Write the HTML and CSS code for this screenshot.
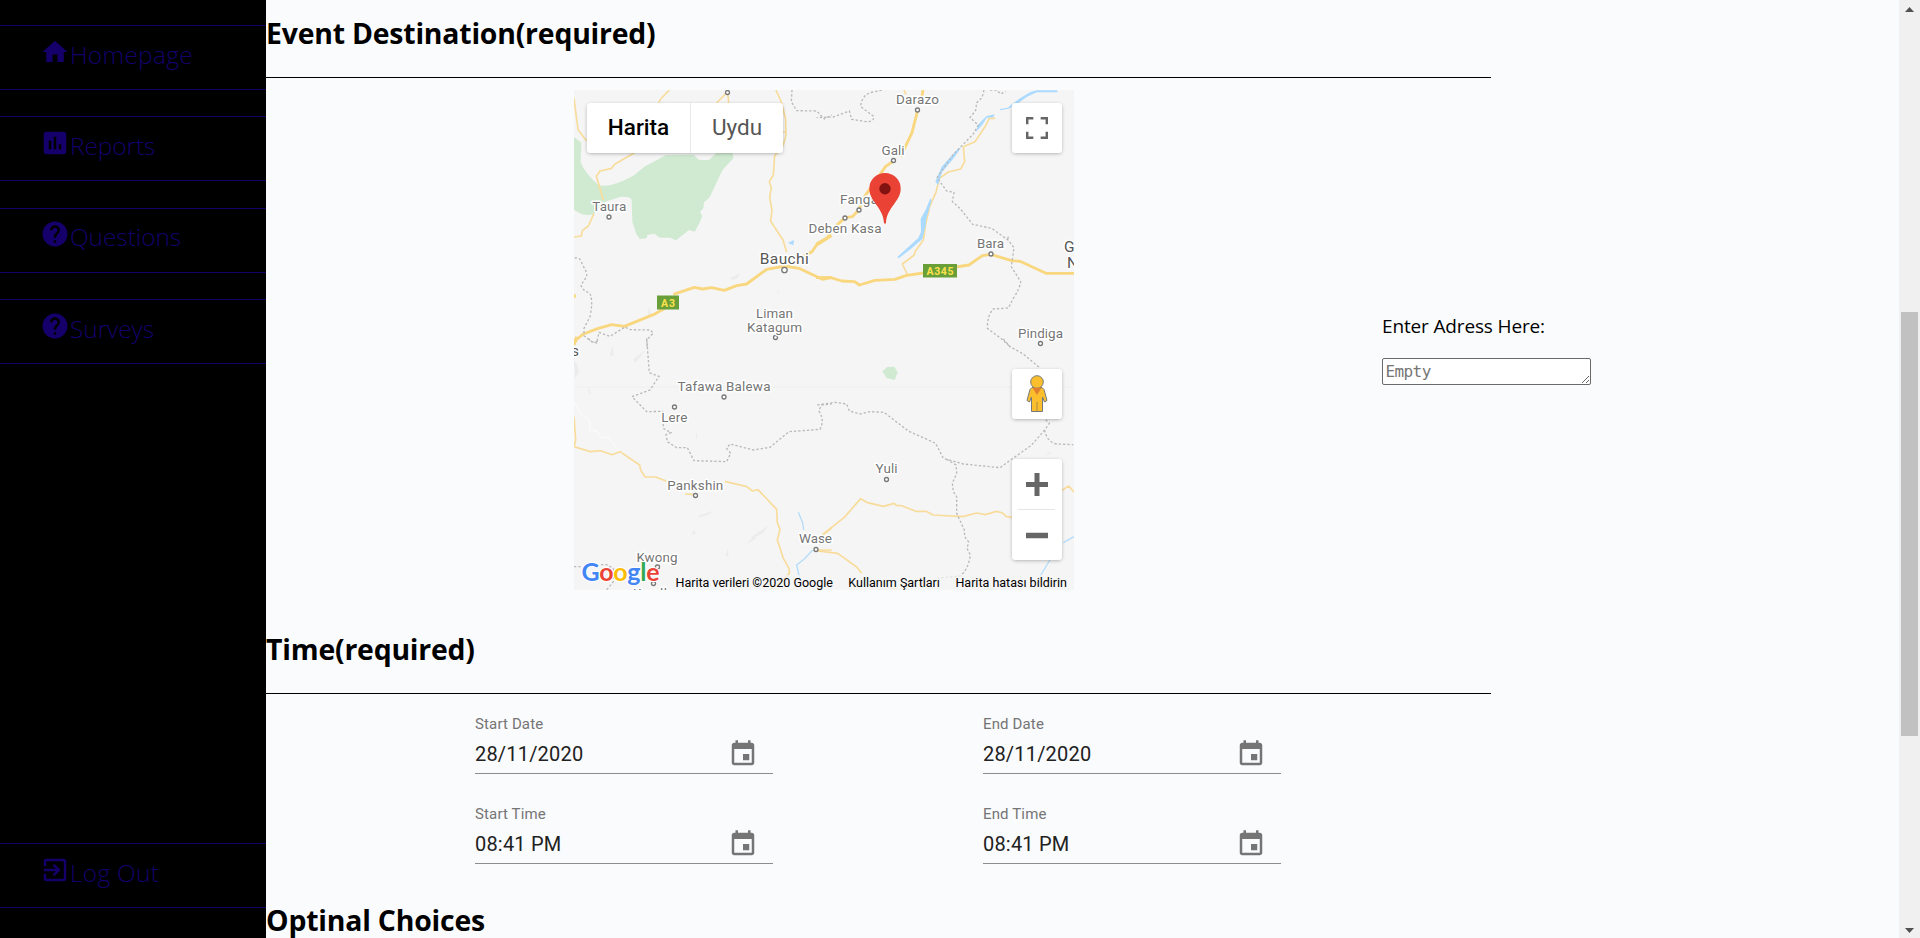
FILE: index.html
```html
<!DOCTYPE html>
<html lang="en">
<head>
<meta charset="utf-8">
<title>Create Event</title>
<link rel="stylesheet" href="styles.css">
</head>
<body>
<svg class="defs" width="0" height="0" aria-hidden="true">
  <symbol id="i-home" viewBox="0 0 24 24"><path d="M10 20v-6h4v6h5v-8h3L12 3 2 12h3v8z"/></symbol>
  <symbol id="i-chart" viewBox="0 0 24 24"><path d="M19 3H5c-1.100 0-2 .9-2 2v14c0 1.100.9 2 2 2h14c1.100 0 2-.9 2-2V5c0-1.100-.9-2-2-2zM9 17H7v-7h2v7zm4 0h-2V7h2v10zm4 0h-2v-4h2v4z"/></symbol>
  <symbol id="i-help" viewBox="0 0 24 24"><path d="M12 2C6.480 2 2 6.480 2 12s4.480 10 10 10 10-4.480 10-10S17.520 2 12 2zm1 17h-2v-2h2v2zm2.070-7.750l-.9.920C13.450 12.900 13 13.500 13 15h-2v-.5c0-1.100.450-2.100 1.170-2.830l1.240-1.260c.370-.360.590-.860.590-1.410 0-1.100-.9-2-2-2s-2 .9-2 2H8c0-2.210 1.790-4 4-4s4 1.790 4 4c0 .880-.360 1.680-.930 2.250z"/></symbol>
  <symbol id="i-exit" viewBox="0 0 24 24"><path d="M10.090 15.590L11.500 17l5-5-5-5-1.410 1.410L12.670 11H3v2h9.670l-2.580 2.590zM19 3H5c-1.110 0-2 .9-2 2v4h2V5h14v14H5v-4H3v4c0 1.100.890 2 2 2h14c1.100 0 2-.9 2-2V5c0-1.100-.9-2-2-2z"/></symbol>
  <symbol id="i-cal" viewBox="0 0 24 24"><path d="M17 12h-5v5h5v-5zM16 1v2H8V1H6v2H5c-1.110 0-1.990.9-1.990 2L3 19c0 1.100.890 2 2 2h14c1.100 0 2-.9 2-2V5c0-1.100-.9-2-2-2h-1V1h-2zm3 18H5V8h14v11z"/></symbol>
</svg>
<div class="app">
  <nav class="sidebar">
    <div class="nav-group">
      <a class="nav-item"><svg class="icon"><use href="#i-home"/></svg><span class="nav-text nav-wide">Homepage</span></a>
      <a class="nav-item"><svg class="icon"><use href="#i-chart"/></svg><span class="nav-text">Reports</span></a>
      <a class="nav-item"><svg class="icon"><use href="#i-help"/></svg><span class="nav-text">Questions</span></a>
      <a class="nav-item"><svg class="icon"><use href="#i-help"/></svg><span class="nav-text">Surveys</span></a>
    </div>
    <a class="nav-item"><svg class="icon"><use href="#i-exit"/></svg><span class="nav-text nav-wide">Log Out</span></a>
  </nav>

  <main class="content">
    <h2 class="title title-destination">Event Destination(required)</h2>
    <section class="destination">
      <div class="map">
        <svg class="map-art" width="500" height="500" viewBox="0 0 500 500">
          <rect width="500" height="500" fill="#f5f5f5"/>
          <path d="M0 297H500" stroke="#efefef"/>
          <!-- north west -->
          <g transform="translate(-4 -5) scale(.33333)">
            <path class="park" d="M12 156L34 173 32 232Q45 265 85 300 120 310 190 272L223 245 287 211 370 209 388 225H417L440 203H488L490 220 458 254 418 338 402 352 400 370 390 380 397 393 388 415 374 440 357 435 318 466 300 458H270L253 446 232 450 230 460 209 462 199 447 187 410 185 345Q180 333 150 336L105 350 70 388Q40 395 12 374z"/>
            <path class="water" d="M654 474L672 465 670 481z"/>
            <path class="relief" d="M480 580L510 564 503 578 488 585zM613 628L630 612 627 620zM233 690L238 665 244 690z"/>
            <path class="road" d="M12 40L24 134 50 168M298 15L272 42 266 54M440 54L473 20 476 54M618 15L635 54 647 103 648 150 640 180 614 212 610 270 598 290 604 308 599 338 606 375 602 409 639 465 650 502M205 196L178 212 134 238 125 250 90 258 79 274 100 345M72 385L55 423 37 437 34 453 12 456M635 141H648"/>
            <path class="highway" d="M12 780L18 765 40 747 85 730 125 719 163 724 250 689 285 670M310 628L373 607 398 612 425 608 463 616 500 602 530 597 590 553 645 543 690 551 757 583 785 578M700 514L726 500 738 482 785 452"/>
            <circle cx="11" cy="633" r="7" fill="#f9d77b"/>
            <path class="border" d="M666 15L664 50 680 77 740 78 763 102 785 90M14 519Q32 515 37 540 52 560 50 575L33 600Q35 615 60 625 70 650 60 695L42 730 42 752 65 770 80 774 87 742 120 754 165 726 180 734 240 735 250 744 230 765 232 790"/>
          </g>
          <!-- north east -->
          <g transform="translate(246 -5) scale(.33333)">
            <path class="road" d="M252 15L258 29M525 100H508L496 124 465 170 430 185 434 230 422 252 385 261 358 280 348 322 330 362 318 412 310 465 285 500 283 510 247 537 263 570"/>
            <path class="highway" d="M309 15L305 38 296 50M292 80L276 143 242 215M221 228L197 244 165 290 130 340 117 374 97 395 75 398 40 430 22 458-12 478M-12 578L30 577 66 588 104 590 118 600 165 586 225 583 260 571 310 564M408 546L447 540 487 512 512 508 575 527 600 529 678 565 762 565"/>
            <path class="water" d="M232 516L275 477 295 459 303 440 302 402 318 372 331 340 335 346 319 402 317 422 307 462 275 490 236 520zM346 290L365 245 410 196 424 187 402 218 366 262 354 300zM467 142L475 118 500 93 524 88 520 97 500 98 488 118zM540 72L563 68 600 40 630 22 650 16H712V22H650L620 36 590 58 565 71 541 76z"/>
            <path class="border" d="M185 15L165 20Q125 25 122 65L162 95Q160 115 128 108L95 103 88 78 40 96-10 98M492 15L486 38 470 53 467 76 450 98 475 120 460 147 400 208 351 278 380 318 402 322 397 350 420 370 458 418 515 430 565 466 582 488 574 545 602 590Q600 610 580 640L565 669 520 672Q502 690 502 730L545 762 570 785M510 15H530L542 27 557 20M565 455L562 467"/>
          </g>
          <!-- south west -->
          <g transform="translate(-4 250) scale(.33333)">
            <path class="relief" d="M54 140L61 152 62 165 56 160zM120 45L128 15 131 45 122 50zM190 57L225 30 210 52 195 68zM12 60L22 75 27 95 15 115zM377 290L380 270 382 300zM383 528L430 512 415 525 388 532zM363 585L373 568 377 582zM520 627L550 588 560 594 535 610zM545 590L595 556 580 578 550 595zM468 645L473 625 476 655z"/>
            <path d="M12 185L30 220 60 245V270L82 274 92 293H113L150 335" fill="none" stroke="#fcfcfc" stroke-width="3"/>
            <path class="road" d="M12 230L17 300 12 320 60 335 92 332 126 344 150 335 209 375 212 390 225 411 257 411 290 424M345 462L375 464M465 424L530 440 548 453 564 449 620 508 622 548 630 568 622 600 640 655 657 685 658 700 640 720 600 750M730 630H785M758 585L785 564"/>
            <path class="highway" d="M20-10L11 12"/>
            <path d="M728 630L703 657 680 675 690 720M685 517L698 548 701 570" class="river"/>
            <path class="border" d="M55-5Q70 15 87 0M230-5L238 98 267 109 240 150 186 170 230 215 278 214 280 265 303 278 288 284 292 305 320 323H352L372 362 470 365 482 340 470 325 480 312 550 330 600 322 657 275 750 268Q765 240 746 212L755 195 785 192M12 680H35M80 674H110L130 685V725L110 750"/>
          </g>
          <!-- south east -->
          <g transform="translate(246 250) scale(.33333)">
            <path class="park" d="M187 94L202 81 223 80 233 97 224 120 200 114z"/>
            <path class="park" d="M485 750Q495 740 525 747L522 750z"/>
            <path class="relief" d="M672 347L690 335 695 340 680 345z"/>
            <path class="road" d="M8 583L73 532 122 476 140 487 190 499 223 490 228 496 245 497 287 514H318L340 525 428 530 470 519 495 524 530 514 548 519 558 529 578 533M725 452L746 438 762 456M-12 632L53 640 110 681 125 700M210 742L232 750"/>
            <path class="river" d="M762 590L730 608M690 660L664 702 650 740"/>
            <path class="border" d="M-8 195L45 187 80 192 88 213 120 222 150 215 192 217 265 273 347 310 370 355 430 372 540 383 635 315 674 270 688 250 670 232M674 270Q680 305 710 312L760 314M380 358L408 375 410 400 397 430 400 455 410 470V520L433 570 434 590 446 606 441 625 451 645Q445 690 420 708L350 715M550-3L570 20 610 42 660 84"/>
          </g>
          <g class="dots">
            <circle cx="153.500" cy="2.500" r="2"/><circle cx="35" cy="127" r="2"/><circle cx="210.500" cy="180" r="2.700"/><circle cx="201.500" cy="247.500" r="2"/>
            <circle cx="343.500" cy="20" r="2"/><circle cx="319.500" cy="70.500" r="2"/><circle cx="285" cy="120" r="2"/><circle cx="271" cy="128" r="2"/><circle cx="417" cy="164" r="2"/><circle cx="466.500" cy="253.500" r="2"/>
            <circle cx="150" cy="307" r="2"/><circle cx="100.500" cy="317" r="2"/><circle cx="121.500" cy="405.500" r="2"/><circle cx="242" cy="459.500" r="2"/><circle cx="83.500" cy="477" r="2"/><circle cx="79.500" cy="493.500" r="2"/><circle cx="312.500" cy="389.500" r="2"/>
          </g>
          <g class="places">
            <text x="35.300" y="121" textLength="34">Taura</text>
            <text x="343.500" y="14" textLength="43">Darazo</text>
            <text x="319" y="64.500" textLength="23">Gali</text>
            <text x="266" y="114" class="start" textLength="38">Fanga</text>
            <text x="271" y="143" textLength="73">Deben Kasa</text>
            <text x="416.500" y="157.500" textLength="27">Bara</text>
            <text x="466.500" y="247.500" textLength="45">Pindiga</text>
            <text x="200.500" y="228" textLength="37">Liman</text>
            <text x="200.500" y="241.500" textLength="55">Katagum</text>
            <text x="150" y="301" textLength="93">Tafawa Balewa</text>
            <text x="100.300" y="332" textLength="26">Lere</text>
            <text x="121.300" y="399.500" textLength="56">Pankshin</text>
            <text x="241.500" y="453" textLength="33">Wase</text>
            <text x="83" y="471.500" textLength="41">Kwong</text>
            <text x="80" y="508" textLength="42">Kwalla</text>
            <text x="312.500" y="383" textLength="22">Yuli</text>
            <text class="city" x="210.300" y="173.500" textLength="49">Bauchi</text>
            <text class="city start" x="490" y="162">Go</text>
            <text class="city start" x="493" y="178">Na</text>
            <text class="city start" x="-3" y="266">s</text>
          </g>
          <g class="shields">
            <rect x="83" y="205.500" width="22" height="14"/><text x="94" y="216.500" textLength="14">A3</text>
            <rect x="349" y="174" width="34" height="13.500"/><text x="366" y="185" textLength="27">A345</text>
          </g>
          <path d="M310 133C309.500 118 295.300 111 295.300 98.700a15.700 15.700 0 0 1 31.400 0C326.700 111 312.500 118 312 133Q311 134.500 310 133z" fill="#ea4335"/>
          <circle cx="311" cy="98.700" r="5.700" fill="#811411"/>
        </svg>
        <div class="map-type"><span class="type-on">Harita</span><span class="type-off">Uydu</span></div>
        <div class="ctl fullscreen"><svg width="22" height="22" viewBox="0 0 18 18" fill="#666"><path d="M0 0v6h2V2h4V0H0zm16 0h-4v2h4v4h2V0h-2zm0 16h-4v2h6v-6h-2v4zM2 12H0v6h6v-2H2v-4z"/></svg></div>
        <div class="ctl pegman"><svg width="22" height="38" viewBox="0 0 22 38"><g fill="#fbbf2d" stroke="#75797d" stroke-width="1"><path d="M6 12.500h10l2 2 3 11-2.500 1.500-2-5V36.500H5.500V22l-2 5L1 25.500l3-11z"/><circle cx="11" cy="7" r="6.300"/></g><path d="M6.500 12.800h9L11 20z" fill="#e07f2e"/><path d="M11 27v9.500" stroke="#a78a42"/></svg></div>
        <div class="ctl zoom"><svg width="50" height="101" viewBox="0 0 50 101"><path d="M14 25.500H36M25 14V37" stroke="#666" stroke-width="5"/><path d="M6 50.500H43" stroke="#e6e6e6"/><path d="M14 76.500H36" stroke="#666" stroke-width="5.500"/></svg></div>
        <svg class="logo" width="84" height="30" viewBox="0 0 84 30"><text x="2.500" y="21" textLength="78"><tspan fill="#4285f4">G</tspan><tspan fill="#ea4335">o</tspan><tspan fill="#fbbc05">o</tspan><tspan fill="#4285f4">g</tspan><tspan fill="#34a853">l</tspan><tspan fill="#ea4335">e</tspan></text></svg>
        <div class="legal"><span>Harita verileri ©2020 Google</span><span>Kullanım Şartları</span><span>Harita hatası bildirin</span></div>
      </div>
      <div class="address">
        <label class="address-label" for="address">Enter Adress Here:</label>
        <textarea class="address-input" id="address" rows="1" placeholder="Empty"></textarea>
      </div>
    </section>
    <h2 class="title title-time">Time(required)</h2>
    <section class="times">
      <div class="field"><span class="field-label">Start Date</span><div class="field-row"><span>28/11/2020</span><svg class="icon"><use href="#i-cal"/></svg></div></div>
      <div class="field"><span class="field-label">End Date</span><div class="field-row"><span>28/11/2020</span><svg class="icon"><use href="#i-cal"/></svg></div></div>
      <div class="field"><span class="field-label">Start Time</span><div class="field-row"><span>08:41 PM</span><svg class="icon"><use href="#i-cal"/></svg></div></div>
      <div class="field"><span class="field-label">End Time</span><div class="field-row"><span>08:41 PM</span><svg class="icon"><use href="#i-cal"/></svg></div></div>
    </section>
    <h2 class="title title-optional">Optinal Choices</h2>
  </main>

  <div class="scrollbar">
    <svg width="9" height="5"><path d="M0 5L4.500 0 9 5z"/></svg>
    <div class="thumb"></div>
    <svg class="arrow-down" width="9" height="5"><path d="M0 0L4.500 5 9 0z"/></svg>
  </div>
</div>
</body>
</html>
```

FILE: styles.css
```css
* { box-sizing: border-box; }
body { margin: 0; background: #fafbfd; color: #000; font-family: "Open Sans", "Noto Sans", sans-serif; overflow: hidden; }
.defs { display: block; }
.app { display: flex; height: 938px; overflow: hidden; }
.icon { width: 30px; height: 30px; fill: currentColor; flex: none; }

.sidebar { width: 266px; flex: none; background: #000; color: #15006b; padding: 25px 0 30px; display: flex; flex-direction: column; justify-content: space-between; }
.nav-group { display: flex; flex-direction: column; gap: 26.400px; }
.nav-item { display: flex; height: 65px; padding: 10.600px 0 0 40px; border: solid #15006b; border-width: 1px 0; font-size: 24.500px; font-weight: 300; line-height: 35px; }
.nav-text { white-space: nowrap; letter-spacing: -0.100px; }
.nav-wide { letter-spacing: .25px; }

.content { flex: 1; min-width: 0; height: 938px; overflow: hidden; }
.title { width: 1225px; margin: 0; font-size: 28.400px; font-weight: 700; line-height: 40px; letter-spacing: -0.200px; border-bottom: 1px solid #000; white-space: nowrap; }
.title-destination { padding-top: 13px; height: 78px; }
.title-time { padding-top: 39px; height: 104px; }
.title-optional { padding-top: 36px; border: 0; }

.destination { display: flex; align-items: flex-start; padding: 12px 0 0 308px; }
.map { position: relative; width: 500px; height: 500px; flex: none; overflow: hidden; font-family: Roboto, sans-serif; }
.map-art { display: block; }
.park { fill: #d0ead1; }
.water { fill: #aadaff; }
.relief { fill: #ececec; }
.river { fill: none; stroke: #b5ddfb; stroke-width: 4; }
.road { fill: none; stroke: #f8dc9b; stroke-width: 5; stroke-linejoin: round; }
.highway { fill: none; stroke: #f9d77f; stroke-width: 8.500; stroke-linejoin: round; }
.border { fill: none; stroke: #b9b9b9; stroke-width: 4; stroke-dasharray: 7 6; }
.dots { fill: #fff; stroke: #777; stroke-width: 1.300; }
.places { font-size: 13.500px; fill: #757575; text-anchor: middle; stroke: #fff; stroke-width: 3px; stroke-linejoin: round; paint-order: stroke; }
.places .city { font-size: 15.500px; fill: #565656; }
.places .start { text-anchor: start; }
.shields rect { fill: #689f38; }
.shields text { font-size: 10.500px; font-weight: 700; fill: #ffe14d; text-anchor: middle; }
.map-type { position: absolute; left: 13px; top: 13px; display: flex; height: 50px; border-radius: 3px; background: #fff; box-shadow: 0 1px 4px -1px rgba(0,0,0,.4); font-size: 22.500px; line-height: 49px; }
.map-type span { text-align: center; }
.type-on { width: 104px; font-weight: 500; border-right: 1px solid #e8e8e8; }
.type-off { width: 92px; color: #565656; }
.ctl { position: absolute; right: 12px; width: 50px; height: 50px; display: flex; align-items: center; justify-content: center; border-radius: 3px; background: #fff; box-shadow: 0 1px 4px -1px rgba(0,0,0,.4); }
.fullscreen { top: 13px; }
.pegman { top: 279px; padding-right: 1px; }
.zoom { top: 369px; height: 101px; }
.logo { position: absolute; left: 5px; top: 470px; font: 700 25px Lato, sans-serif; paint-order: stroke; stroke: #fff; stroke-width: 2px; }
.legal { position: absolute; right: 0; bottom: 0; display: flex; gap: 15.500px; padding: 0 7px 0 6px; font-size: 12.500px; line-height: 15px; white-space: nowrap; background: rgba(245,245,245,.7); }

.address { display: flex; flex-direction: column; margin: 223px 0 0 308px; width: 209px; }
.address-label { font-size: 19px; line-height: 26px; white-space: nowrap; letter-spacing: -0.150px; }
.address-input { margin-top: 19px; width: 209px; height: 27px; padding: 2.500px; border: 1px solid #6a6a6a; border-radius: 2px; background: #fff; font: 16px/20px "DejaVu Sans Mono", monospace; letter-spacing: -0.600px; overflow: hidden; resize: both; }
.address-input::placeholder { color: #757575; }

.times { display: grid; grid-template-columns: 298px 298px; column-gap: 210px; row-gap: 30px; padding: 20px 0 0 209px; font-family: Roboto, sans-serif; }
.field { height: 60px; border-bottom: 1px solid #8c8d8e; }
.field-label { display: block; font-size: 15px; line-height: 20px; letter-spacing: .14px; color: #757575; }
.field-row { display: flex; align-items: center; justify-content: space-between; height: 39px; padding: 0 15px 0 0; font-size: 20px; letter-spacing: .19px; color: #212121; }
.field-row .icon { color: #757575; }

.scrollbar { width: 21px; flex: none; background: #f0f0f0; display: flex; flex-direction: column; align-items: center; padding: 7px 0 5px; fill: #505050; }
.thumb { width: 17px; height: 424px; margin-top: 300px; background: #c1c1c1; flex: none; }
.arrow-down { margin-top: auto; }
```
